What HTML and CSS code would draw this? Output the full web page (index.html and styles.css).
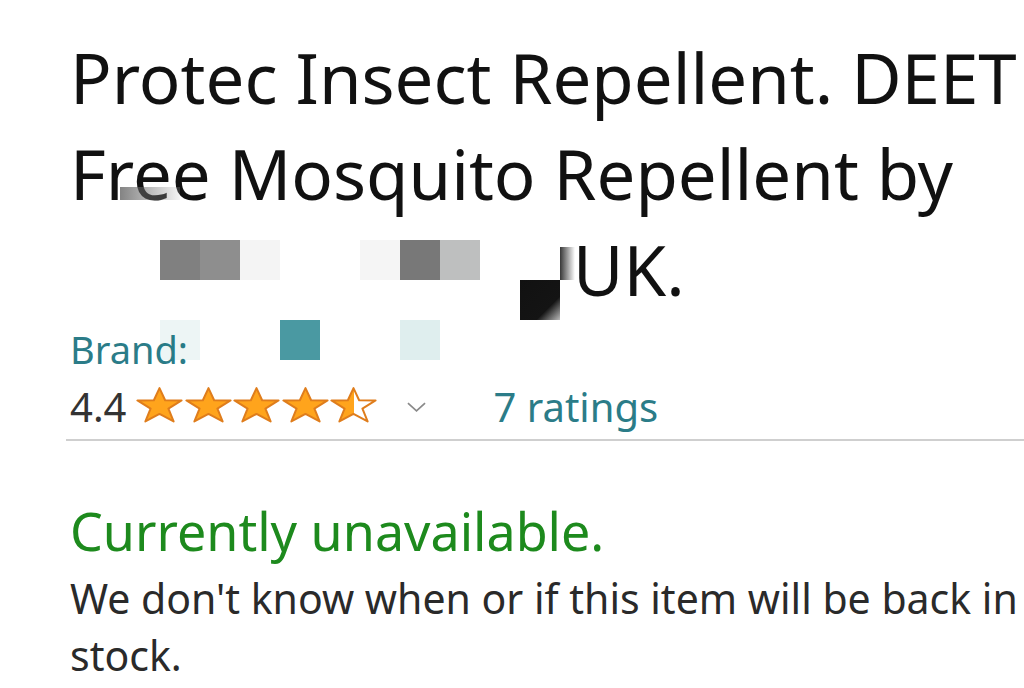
FILE: index.html
```html
<!DOCTYPE html>
<html lang="en">
<head>
<meta charset="utf-8">
<title>Protec Insect Repellent</title>
<link rel="stylesheet" href="styles.css">
</head>
<body>
<svg class="defs" width="0" height="0" aria-hidden="true">
  <defs>
    <linearGradient id="halfFill" x1="0" x2="1" y1="0" y2="0">
      <stop offset="50%" stop-color="#ffa41c"/>
      <stop offset="50%" stop-color="#ffffff"/>
    </linearGradient>
  </defs>
</svg>
<main class="page">
  <h1 class="title">Protec Insect Repellent. DEET<br>Free Mosquito Repellent by<br><span class="redacted"></span>UK.</h1>
  <div class="brand">Brand:</div>
  <div class="rating">
    <span class="score">4.4</span>
    <span class="stars">
      <svg class="star" viewBox="0 0 100 95" preserveAspectRatio="none"><polygon points="50,3 62,35 97,35.5 69,57 80,91 50,71 20,91 31,57 3,35.5 38,35"/></svg>
      <svg class="star" viewBox="0 0 100 95" preserveAspectRatio="none"><polygon points="50,3 62,35 97,35.5 69,57 80,91 50,71 20,91 31,57 3,35.5 38,35"/></svg>
      <svg class="star" viewBox="0 0 100 95" preserveAspectRatio="none"><polygon points="50,3 62,35 97,35.5 69,57 80,91 50,71 20,91 31,57 3,35.5 38,35"/></svg>
      <svg class="star" viewBox="0 0 100 95" preserveAspectRatio="none"><polygon points="50,3 62,35 97,35.5 69,57 80,91 50,71 20,91 31,57 3,35.5 38,35"/></svg>
      <svg class="star star-half" viewBox="0 0 100 95" preserveAspectRatio="none"><polygon points="50,3 62,35 97,35.5 69,57 80,91 50,71 20,91 31,57 3,35.5 38,35"/></svg>
    </span>
    <svg class="chevron" viewBox="0 0 20 10"><polyline points="1,1 10,9 19,1"/></svg>
    <a class="count" href="#">7 ratings</a>
  </div>
  <hr class="divider">
  <div class="availability">Currently unavailable.</div>
  <p class="note">We don't know when or if this item will be back in stock.</p>

  <div class="mosaic" aria-hidden="true">
    <span class="px" style="left:120px;top:187px;width:60px;height:13px;background:linear-gradient(90deg,rgba(90,90,90,.75),rgba(200,200,200,.2))"></span>
    <span class="px" style="left:160px;top:240px;background:#808080"></span>
    <span class="px" style="left:200px;top:240px;background:#8e8e8e"></span>
    <span class="px" style="left:240px;top:240px;background:#f4f4f4"></span>
    <span class="px" style="left:360px;top:240px;background:#f5f5f5"></span>
    <span class="px" style="left:400px;top:240px;background:#787878"></span>
    <span class="px" style="left:440px;top:240px;background:#bebfbf"></span>
    <span class="px" style="left:560px;top:247px;width:15px;height:33px;background:linear-gradient(90deg,rgba(20,20,20,.85),rgba(255,255,255,0))"></span>
    <span class="px" style="left:520px;top:280px;background:linear-gradient(135deg,#111 0%,#141414 70%,#bbb 100%)"></span>
    <span class="px" style="left:160px;top:320px;background:rgba(0,110,120,.07)"></span>
    <span class="px" style="left:280px;top:320px;background:#4a99a2"></span>
    <span class="px" style="left:400px;top:320px;background:#dfeeee"></span>
  </div>
</main>
</body>
</html>
```

FILE: styles.css
```css
html, body {
  margin: 0;
  padding: 0;
  background: #ffffff;
}

body {
  font-family: "Noto Sans", "Open Sans", sans-serif;
  color: #0f1111;
  width: 1024px;
  height: 688px;
  overflow: hidden;
}

.defs {
  position: absolute;
  width: 0;
  height: 0;
}

.page {
  position: relative;
  padding: 29px 0 0 70px;
}

.title {
  margin: 0;
  font-weight: 400;
  font-size: 69px;
  line-height: 96px;
  white-space: nowrap;
  color: #111111;
}

.redacted {
  display: inline-block;
  width: 503px;
  height: 1px;
}

.brand {
  margin-top: 10px;
  font-size: 38px;
  line-height: 44px;
  color: #2b7c88;
}

.rating {
  display: flex;
  align-items: center;
  height: 52px;
  margin-top: 10px;
  font-size: 40px;
  line-height: 52px;
  white-space: nowrap;
}

.score {
  color: #333333;
}

.stars {
  display: flex;
  gap: 1.5px;
  margin-left: 10px;
  margin-bottom: 4px;
}

.star {
  display: block;
  width: 47px;
  height: 36px;
}

.star polygon {
  fill: #ffa41c;
  stroke: #df7d1c;
  stroke-width: 2;
  stroke-linejoin: round;
  vector-effect: non-scaling-stroke;
}

.star-half polygon {
  fill: url(#halfFill);
}

.chevron {
  display: block;
  width: 19px;
  height: 10px;
  margin-left: 30px;
}

.chevron polyline {
  fill: none;
  stroke: #8a8a8a;
  stroke-width: 1.8;
}

.count {
  margin-left: 67px;
  color: #2b7c88;
  text-decoration: none;
}

.divider {
  margin: 6px 0 0 -4px;
  border: 0;
  height: 2px;
  background: #cfcfcf;
}

.availability {
  margin-top: 58px;
  font-size: 52px;
  line-height: 64px;
  color: #1d8a1d;
}

.note {
  margin: 7px 0 0;
  font-size: 41px;
  line-height: 57px;
  color: #2a2a2a;
}

.mosaic {
  position: absolute;
  left: 0;
  top: 0;
  width: 0;
  height: 0;
}

.px {
  position: absolute;
  width: 40px;
  height: 40px;
}
```
